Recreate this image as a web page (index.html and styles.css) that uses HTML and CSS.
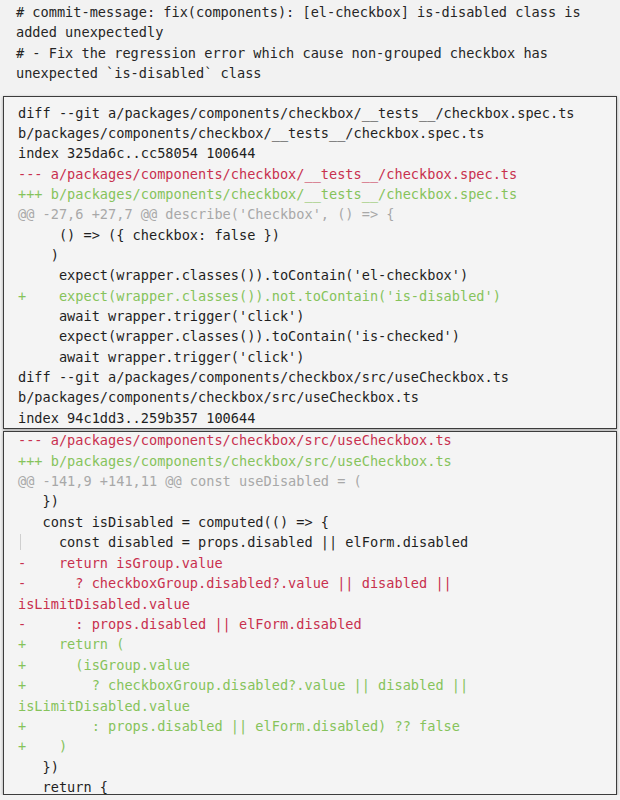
FILE: index.html
```html
<!DOCTYPE html>
<html lang="en">
<head>
<meta charset="utf-8">
<title>Commit diff</title>
<link rel="stylesheet" href="styles.css">
</head>
<body>
<pre class="commit"># commit-message: fix(components): [el-checkbox] is-disabled class is
added unexpectedly
# - Fix the regression error which cause non-grouped checkbox has
unexpected `is-disabled` class</pre>

<div class="box box-first">
<pre class="code">diff --git a/packages/components/checkbox/__tests__/checkbox.spec.ts
b/packages/components/checkbox/__tests__/checkbox.spec.ts
index 325da6c..cc58054 100644
<span class="del">--- a/packages/components/checkbox/__tests__/checkbox.spec.ts</span>
<span class="add">+++ b/packages/components/checkbox/__tests__/checkbox.spec.ts</span>
<span class="hunk">@@ -27,6 +27,7 @@ describe('Checkbox', () =&gt; {</span>
     () =&gt; ({ checkbox: false })
    )
     expect(wrapper.classes()).toContain('el-checkbox')
<span class="add">+    expect(wrapper.classes()).not.toContain('is-disabled')</span>
     await wrapper.trigger('click')
     expect(wrapper.classes()).toContain('is-checked')
     await wrapper.trigger('click')
diff --git a/packages/components/checkbox/src/useCheckbox.ts
b/packages/components/checkbox/src/useCheckbox.ts
index 94c1dd3..259b357 100644</pre>
</div>

<div class="box box-second">
<pre class="code code-scrolled"><span class="del">--- a/packages/components/checkbox/src/useCheckbox.ts</span>
<span class="add">+++ b/packages/components/checkbox/src/useCheckbox.ts</span>
<span class="hunk">@@ -141,9 +141,11 @@ const useDisabled = (</span>
   })
   const isDisabled = computed(() =&gt; {
<span class="guide"> </span>    const disabled = props.disabled || elForm.disabled
<span class="del">-    return isGroup.value
-      ? checkboxGroup.disabled?.value || disabled ||
isLimitDisabled.value
-      : props.disabled || elForm.disabled</span>
<span class="add">+    return (
+      (isGroup.value
+        ? checkboxGroup.disabled?.value || disabled ||
isLimitDisabled.value
+        : props.disabled || elForm.disabled) ?? false
+    )</span>
   })
   return {</pre>
</div>
</body>
</html>
```

FILE: styles.css
```css
html, body {
  margin: 0;
  padding: 0;
  background: #f2f2f2;
}

body {
  padding-top: 2px;
  font-family: "DejaVu Sans Mono", "Liberation Mono", monospace;
  font-size: 13.6px;
  color: #1f1f1f;
}

pre {
  margin: 0;
  font-family: inherit;
  font-size: inherit;
  line-height: 20.4px;
  white-space: pre;
}

.commit {
  padding-left: 16px;
  color: #262626;
}

.box {
  margin: 0 3px;
  border: 1px solid #3c3c3c;
  background: #f4f4f4;
  box-shadow: 0 1px 3px rgba(0, 0, 0, 0.35);
  overflow: hidden;
}

.box-first {
  margin-top: 12px;
}

.box-first .code {
  padding: 6px 0 0 14px;
  line-height: 20.35px;
}

.box-second {
  margin-top: 2px;
  height: 362px;
}

.code-scrolled {
  margin-top: -2px;
  padding-left: 14px;
  line-height: 20.42px;
}

.del {
  color: #c8304e;
}

.add {
  color: #86c35b;
}

.hunk {
  color: #a8a8a8;
}

.guide {
  background: linear-gradient(#cfcfcf, #cfcfcf) 2px 0 / 1px 100% no-repeat;
}
```
